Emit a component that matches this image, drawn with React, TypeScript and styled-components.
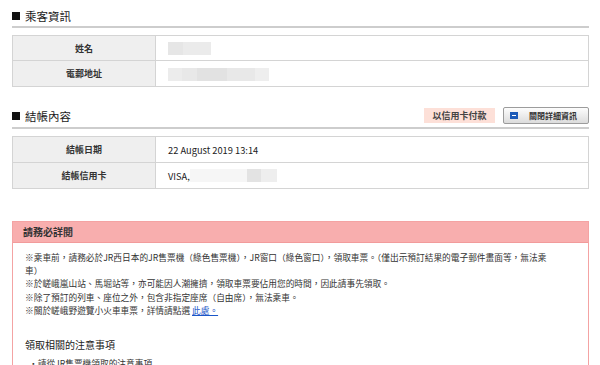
import React from "react";
import styled, { createGlobalStyle } from "styled-components";

const GlobalStyle = createGlobalStyle`
  html, body {
    margin: 0;
    padding: 0;
    background: #fff;
  }
  body {
    font-family: "Noto Sans CJK TC", "Liberation Sans", sans-serif;
    color: #333;
    overflow: hidden;
  }
`;

const Page = styled.div`
  width: 600px;
  height: 365px;
  box-sizing: border-box;
  padding: 5px 11px 0 12px;
  overflow: hidden;
`;

const SectionHead = styled.div<{ $height: number; $top: number }>`
  display: flex;
  align-items: center;
  height: ${({ $height }) => `${$height}px`};
  margin-top: ${({ $top }) => `${$top}px`};
  border-bottom: 2px solid #cdcdcd;
`;

const Title = styled.h2`
  display: flex;
  align-items: center;
  margin: 0;
  font-size: 11.5px;
  font-weight: 400;
  line-height: 14px;
  color: #1a1a1a;
  flex: 1;
  &::before {
    content: "";
    width: 8px;
    height: 8px;
    background: #111;
    margin-right: 5px;
  }
`;

const Badge = styled.span`
  width: 71px;
  height: 15px;
  background: #fde0d8;
  font-size: 9px;
  font-weight: 700;
  line-height: 15px;
  text-align: center;
  color: #444;
  margin-right: 8px;
`;

const ToggleButton = styled.button`
  display: flex;
  align-items: center;
  width: 86px;
  height: 17px;
  padding: 0 0 0 6px;
  box-sizing: border-box;
  border: 1px solid #9c9c9c;
  border-radius: 2px;
  background: linear-gradient(#fdfdfd, #dcdcdc);
  font-family: inherit;
  font-size: 8px;
  font-weight: 700;
  color: #333;
  cursor: pointer;
`;

const MinusIcon = styled.span`
  position: relative;
  width: 8px;
  height: 7px;
  background: #1d5bb8;
  margin-right: 11px;
  &::after {
    content: "";
    position: absolute;
    left: 2px;
    right: 2px;
    top: 3px;
    height: 1px;
    background: #fff;
  }
`;

const InfoTable = styled.table`
  width: 100%;
  margin-top: 7px;
  border-collapse: collapse;
  border: 1px solid #d4d4d4;
`;

const Row = styled.tr<{ $height: number }>`
  height: ${({ $height }) => `${$height}px`};
`;

const Label = styled.th`
  width: 142px;
  padding: 0;
  background: #efefef;
  border: 1px solid #d4d4d4;
  font-size: 9px;
  font-weight: 700;
  text-align: center;
  color: #333;
`;

const Value = styled.td`
  padding: 0 0 0 12px;
  border: 1px solid #d4d4d4;
  font-size: 9.3px;
  color: #222;
  vertical-align: middle;
`;

const Redacted = styled.span<{ $w: number; $shade: string }>`
  display: inline-block;
  vertical-align: middle;
  width: ${({ $w }) => `${$w}px`};
  height: 13px;
  background: ${({ $shade }) => $shade};
`;

const CardNo = styled.span`
  display: inline-flex;
  align-items: center;
`;

const Notice = styled.section`
  margin-top: 32px;
  border: 1px solid #f4a3a3;
  border-bottom: none;
  height: 200px;
`;

const NoticeHead = styled.div`
  height: 20px;
  background: #f8aeae;
  border-bottom: 1px solid #f29b9b;
  padding-left: 10px;
  font-size: 10px;
  font-weight: 700;
  line-height: 20px;
  color: #333;
`;

const NoticeBody = styled.div`
  padding: 8px 8px 0 12px;
  font-size: 8.7px;
  line-height: 13.2px;
  color: #333;
`;

const Para = styled.p`
  margin: 0;
`;

const Link = styled.a`
  color: #1a56c8;
  text-decoration: underline;
`;

const SubHead = styled.h3`
  margin: 20px 0 0;
  font-size: 10px;
  font-weight: 400;
  line-height: 16px;
  color: #222;
`;

const Bullet = styled.p`
  margin: 4px 0 0 4px;
  font-size: 8.7px;
  line-height: 13px;
`;

export default function App() {
  return (
    <Page>
      <GlobalStyle />
      <SectionHead $height={21} $top={0}>
        <Title>乘客資訊</Title>
      </SectionHead>
      <InfoTable>
        <tbody>
          <Row $height={25}>
            <Label>姓名</Label>
            <Value>
              <Redacted $w={43} $shade="linear-gradient(90deg,#e6e6e6 35%,#ebebeb 35%)" />
            </Value>
          </Row>
          <Row $height={26}>
            <Label>電郵地址</Label>
            <Value>
              <Redacted
                $w={101}
                $shade="linear-gradient(90deg,#ececec 0 14%,#e8e8e8 14% 29%,#e2e2e2 29% 58%,#e8e8e8 58% 86%,#eeeeee 86%)"
              />
            </Value>
          </Row>
        </tbody>
      </InfoTable>

      <SectionHead $height={23} $top={17}>
        <Title>結帳內容</Title>
        <Badge>以信用卡付款</Badge>
        <ToggleButton type="button">
          <MinusIcon />
          關閉詳細資訊
        </ToggleButton>
      </SectionHead>
      <InfoTable>
        <tbody>
          <Row $height={26}>
            <Label>結帳日期</Label>
            <Value>22 August 2019 13:14</Value>
          </Row>
          <Row $height={26}>
            <Label>結帳信用卡</Label>
            <Value>
              <CardNo>
                VISA,
                <Redacted
                  $w={87}
                  $shade="linear-gradient(90deg,#f6f6f6 0 66%,#e3e3e3 66% 82%,#eeeeee 82%)"
                />
              </CardNo>
            </Value>
          </Row>
        </tbody>
      </InfoTable>

      <Notice>
        <NoticeHead>請務必詳閱</NoticeHead>
        <NoticeBody>
          <Para>
            ※乘車前，請務必於JR西日本的JR售票機（綠色售票機），JR窗口（綠色窗口），領取車票。（僅出示預訂結果的電子郵件畫面等，無法乘
            <br />
            車）
          </Para>
          <Para>※於嵯峨嵐山站、馬堀站等，亦可能因人潮擁擠，領取車票要佔用您的時間，因此請事先領取。</Para>
          <Para>※除了預訂的列車、座位之外，包含非指定座席（自由席），無法乘車。</Para>
          <Para>
            ※關於嵯峨野遊覽小火車車票，詳情請點選 <Link href="#">此處。</Link>
          </Para>
          <SubHead>領取相關的注意事項</SubHead>
          <Bullet>・請從JR售票機領取的注意事項</Bullet>
        </NoticeBody>
      </Notice>
    </Page>
  );
}
